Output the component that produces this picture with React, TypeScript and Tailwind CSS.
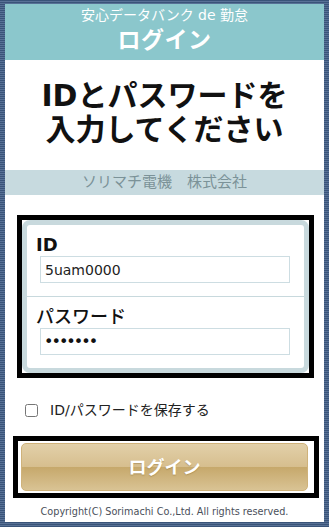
import React from "react";

const F = "font-['DejaVu_Sans','Noto_Sans_CJK_JP',sans-serif]";

export default function App() {
  return (
    <div
      className={`${F} w-[329px] h-[527px] pt-[4px] pb-[5px] px-[5px] bg-[repeating-linear-gradient(to_bottom,#3a5479_0px,#3a5479_1px,#587196_1px,#587196_2px)]`}
    >
      <div className="flex h-full flex-col bg-white">
        {/* header */}
        <div className="flex h-[56px] flex-col items-center bg-[#8bc7cc] pt-[1px] text-white">
          <div className="h-[20px] text-[14px] leading-[20px]">安心データバンク de 勤怠</div>
          <div className="text-[23px] font-bold leading-[30px] tracking-[0.5px]">ログイン</div>
        </div>

        {/* title */}
        <div className="flex h-[110px] flex-col items-center pt-[19px] text-[30px] font-bold leading-[34px] text-[#111]">
          <div>IDとパスワードを</div>
          <div>入力してください</div>
        </div>

        {/* company */}
        <div className="h-[25px] bg-[#c7dadf] text-center text-[15px] leading-[25px] text-[#7b9298]">
          ソリマチ電機　株式会社
        </div>

        {/* form */}
        <div className="ml-[12px] mt-[20px] w-[297px] border-[5px] border-black bg-white">
          <div className="rounded-[8px] border-[5px] border-[#c8d9dd] bg-white">
            <div className="flex flex-col px-[13px] pt-[9px] pb-[13px]">
              <div className="-ml-[4px] h-[22px] text-[18px] font-bold leading-[22px] text-[#111]">ID</div>
              <input
                readOnly
                value="5uam0000"
                className={`${F} h-[27px] w-[250px] border border-[#cddde2] bg-white px-[4px] text-[14px] text-[#222] outline-none`}
              />
            </div>
            <div className="h-px bg-[#c8d9dd]" />
            <div className="flex flex-col px-[13px] pt-[9px] pb-[13px]">
              <div className="-ml-[4px] h-[22px] text-[18px] font-medium leading-[22px] text-[#111]">パスワード</div>
              <input
                readOnly
                type="password"
                value="1234567"
                className={`${F} h-[27px] w-[250px] border border-[#cddde2] bg-white px-[3px] text-[16px] tracking-[-2px] text-[#111] outline-none`}
              />
            </div>
          </div>
        </div>

        {/* remember */}
        <div className="ml-[20px] mt-[22px] flex h-[20px] items-center gap-[12px]">
          <input type="checkbox" className="m-0 h-[13px] w-[13px]" />
          <span className="text-[14px] leading-[20px] text-[#222]">ID/パスワードを保存する</span>
        </div>

        {/* button */}
        <div className="ml-[8px] mt-[16px] w-[306px] border-[5px] border-black bg-white py-[2px] pl-[3px] pr-[6px]">
          <div className="flex h-[48px] items-center justify-center rounded-[5px] border border-[#cfb27a] bg-[linear-gradient(to_bottom,#e2d0a9_0%,#d6be8e_50%,#c6a86b_50%,#d9c394_100%)] text-[18px] font-bold text-white [text-shadow:0_1px_1px_rgba(120,90,30,0.35)]">
            ログイン
          </div>
        </div>

        {/* copyright */}
        <div className="mt-[7px] text-center text-[9.7px] leading-[14px] text-[#4a4f5a]">
          Copyright(C) Sorimachi Co.,Ltd. All rights reserved.
        </div>
      </div>
    </div>
  );
}
